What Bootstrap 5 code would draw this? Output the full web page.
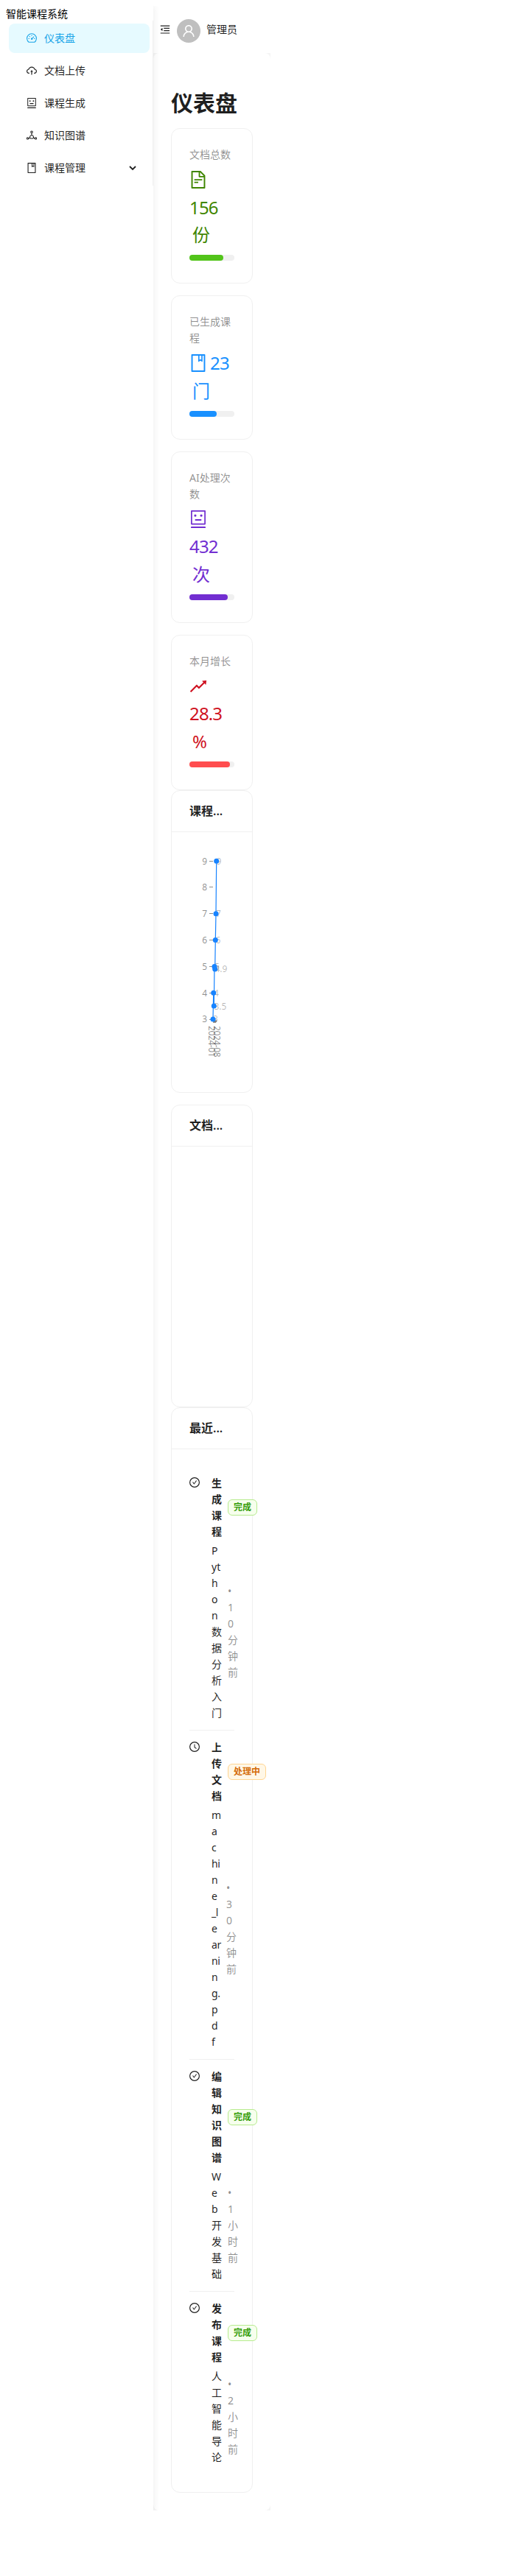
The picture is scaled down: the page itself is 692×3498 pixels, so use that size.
<!DOCTYPE html>
<html lang="zh-CN">
<head>
<meta charset="utf-8">
<title>智能课程系统</title>
<link href="https://cdn.jsdelivr.net/npm/bootstrap@5.3.0/dist/css/bootstrap.min.css" rel="stylesheet">
<style>
body{margin:8px;font:14px/22px "Noto Sans","Noto Sans CJK SC",sans-serif;color:rgba(0,0,0,.88);background:#fff}
svg.ico{width:1em;height:1em;fill:currentColor;flex:none;display:block}
.layout{width:359px;height:3401px;background:#f5f5f5}
.sider{width:200px;background:#fff;box-shadow:2px 0 8px rgba(0,0,0,.06);position:relative;z-index:1}
.logo-text{height:20px;line-height:22px;color:#000}
.menu{border-right:1px solid #f0f0f0;padding:4px 4px 0;height:224px}
.menu .nav-link{height:40px;margin-bottom:4px;padding:0 18px 0 24px;border-radius:8px;color:rgba(0,0,0,.88);gap:10px}
.menu .nav-link.active{background:#e6faff;color:#18a4e8}
.topbar{height:64px;background:#fff;padding-left:9px}
.avatar-disc{width:32px;height:32px;background:#bfbfbf;color:#fff;font-size:18px;margin-left:9px;margin-right:8px}
.main-area{width:159px;background:#fff;border-radius:8px;padding:24px;flex:1}
h2{font-size:30px;line-height:38px;font-weight:600;margin:25px 0 15px}
.panel{border:1px solid #f0f0f0;border-radius:12px;background:#fff;width:111px}
.stat{padding:24px;margin-bottom:16px}
.stat.last{margin-bottom:0}
.stat-title{color:rgba(0,0,0,.45);margin-bottom:4px}
.stat-value{font-size:24px;line-height:37.71px}
.num{letter-spacing:-.85px}
.stat-value svg{display:inline-block;vertical-align:-3px}
.suffix{display:inline-block;margin-left:4px}
.track{height:8px;border-radius:8px;background:#f0f0f0;margin:8px 0 6px}
.track div{height:8px;border-radius:8px}
.panel-head{height:56px;border-bottom:1px solid #f0f0f0;padding:0 24px;font-size:16px;font-weight:600;line-height:55px;white-space:nowrap}
.tall{height:411px}
.feed{padding:23px 24px 24px}
.entry{padding:12px 0;border-bottom:1px solid #f0f0f0;display:flex}
.entry:last-child{border-bottom:0}
.entry>svg{margin:3px 16px 0 0}
.pair{display:flex;align-items:center;gap:8px}
.pair>:first-child{width:14px;word-break:break-all;flex:none}
.pair.tight>:first-child{width:12px;white-space:nowrap;letter-spacing:-.4px}
.when{width:14px;color:rgba(0,0,0,.45);word-break:break-all;flex:none}
.title-row{font-weight:600;margin-bottom:4px}
.state{font-size:12px;line-height:20px;padding:0 7px;border:1px solid #b7eb8f;border-radius:6px;background:#f6ffed;color:#389e0d;white-space:nowrap;flex:none}
.state.busy{border-color:#ffd591;background:#fff7e6;color:#d46b08}
.chart text{font-size:12px;fill:#000;fill-opacity:.45}
.chart .vals text{fill-opacity:.28}
.chart .dates text{letter-spacing:-.4px}
</style>
</head>
<body>
<svg class="d-none">
<symbol id="i-file" viewBox="64 64 896 896"><path d="M854.6 288.6L639.4 73.4c-6-6-14.1-9.4-22.6-9.4H192c-17.7 0-32 14.3-32 32v832c0 17.7 14.3 32 32 32h640c17.7 0 32-14.3 32-32V311.3c0-8.5-3.4-16.7-9.4-22.7zM790.2 326H602V137.8L790.2 326zm1.8 562H232V136h302v216a42 42 0 0042 42h216v494zM504 618H320c-4.4 0-8 3.6-8 8v48c0 4.4 3.6 8 8 8h184c4.4 0 8-3.6 8-8v-48c0-4.4-3.6-8-8-8zM312 490v48c0 4.4 3.6 8 8 8h384c4.4 0 8-3.6 8-8v-48c0-4.4-3.6-8-8-8H320c-4.4 0-8 3.6-8 8z"/></symbol>
<symbol id="i-book" viewBox="64 64 896 896"><path d="M832 64H192c-17.7 0-32 14.3-32 32v832c0 17.7 14.3 32 32 32h640c17.7 0 32-14.3 32-32V96c0-17.7-14.3-32-32-32zm-260 72h96v209.9L621.5 312 572 347.4V136zm220 752H232V136h280v296.9c0 3.3 1 6.6 3 9.3a15.9 15.9 0 0022.3 3.7l83.8-59.9 81.4 59.4c2.7 2 6 3.1 9.4 3.1 8.8 0 16-7.2 16-16V136h64v752z"/></symbol>
<symbol id="i-robot" viewBox="64 64 896 896"><path d="M300 328a60 60 0 10120 0 60 60 0 10-120 0zM852 64H172c-17.7 0-32 14.3-32 32v660c0 17.7 14.3 32 32 32h680c17.7 0 32-14.3 32-32V96c0-17.7-14.3-32-32-32zm-32 660H204V128h616v596zM604 328a60 60 0 10120 0 60 60 0 10-120 0zm250.2 556H169.8c-16.5 0-29.8 14.3-29.8 32v36c0 4.4 3.3 8 7.4 8h729.1c4.1 0 7.4-3.6 7.4-8v-36c.1-17.7-13.2-32-29.7-32zM664 508H360c-4.4 0-8 3.6-8 8v60c0 4.4 3.6 8 8 8h304c4.4 0 8-3.6 8-8v-60c0-4.4-3.6-8-8-8z"/></symbol>
<symbol id="i-check" viewBox="64 64 896 896"><path d="M699 353h-46.9c-10.2 0-19.9 4.9-25.9 13.3L469 584.3l-71.2-98.8c-6-8.3-15.6-13.3-25.9-13.3H325c-6.5 0-10.3 7.4-6.5 12.7l124.6 172.8a31.8 31.8 0 0051.7 0l210.6-292c3.9-5.3.1-12.7-6.4-12.7z"/><circle cx="512" cy="512" r="410" fill="none" stroke="currentColor" stroke-width="76"/></symbol>
<symbol id="i-clock" viewBox="64 64 896 896"><path d="M686.7 638.6L544.1 535.5V288c0-4.4-3.6-8-8-8H488c-4.4 0-8 3.6-8 8v275.4c0 2.6 1.2 5 3.3 6.5l165.4 120.6c3.6 2.6 8.6 1.8 11.2-1.7l28.6-39c2.6-3.7 1.8-8.7-1.8-11.2z"/><circle cx="512" cy="512" r="410" fill="none" stroke="currentColor" stroke-width="76"/></symbol>
</svg>
<div class="layout d-flex">
  <aside class="sider">
    <div class="logo-text">智能课程系统</div>
    <nav class="menu nav flex-column flex-nowrap">
      <a class="nav-link active d-flex align-items-center"><svg class="ico" viewBox="64 64 896 896"><g fill="none" stroke="currentColor" stroke-width="70"><path d="M262 850A410 410 0 1 1 762 850Z" stroke-linejoin="round"/><path d="M512 235v90M225 540h90M709 540h90M305 335l62 62"/></g><path d="M700 335l45 45-150 150a80 80 0 1 1-45-45z"/></svg>仪表盘</a>
      <a class="nav-link d-flex align-items-center"><svg class="ico" viewBox="64 64 896 896"><path d="M518.3 459a8 8 0 00-12.6 0l-112 141.7a7.98 7.98 0 006.3 12.9h73.9V856c0 4.4 3.6 8 8 8h60c4.4 0 8-3.6 8-8V613.7H624c6.7 0 10.4-7.7 6.3-12.9L518.3 459z"/><path d="M811.4 366.7C765.6 245.9 648.9 160 512.2 160S258.8 245.8 213 366.6C127.3 389.1 64 467.2 64 560c0 110.5 89.5 200 199.9 200H304c4.4 0 8-3.6 8-8v-60c0-4.4-3.6-8-8-8h-40.1c-33.7 0-65.4-13.4-89-37.7-23.5-24.2-36-56.8-34.9-90.6.9-26.4 9.9-51.2 26.2-72.1 16.7-21.3 40.1-36.8 66.1-43.7l37.9-9.9 13.9-36.6c8.6-22.8 20.6-44.1 35.7-63.4a245.6 245.6 0 0152.4-49.9c41.1-28.9 89.5-44.2 140-44.2s98.9 15.3 140 44.2c19.9 14 37.5 30.8 52.4 49.9 15.1 19.3 27.1 40.7 35.7 63.4l13.8 36.5 37.8 10C846.1 454.5 884 503.8 884 560c0 33.1-12.9 64.3-36.3 87.7a123.07 123.07 0 01-87.6 36.3H720c-4.4 0-8 3.6-8 8v60c0 4.4 3.6 8 8 8h40.1C870.5 760 960 670.5 960 560c0-92.7-63.1-170.7-148.6-193.3z"/></svg>文档上传</a>
      <a class="nav-link d-flex align-items-center"><svg class="ico"><use href="#i-robot"/></svg>课程生成</a>
      <a class="nav-link d-flex align-items-center"><svg class="ico" viewBox="64 64 896 896"><g fill="none" stroke="currentColor" stroke-width="68"><circle cx="512" cy="210" r="82"/><circle cx="165" cy="760" r="75"/><circle cx="859" cy="760" r="75"/><path d="M512 292v180M512 472L375 560 345 700 425 770H600L680 700 650 560zM350 715L235 765M675 715l115 50"/></g></svg>知识图谱</a>
      <a class="nav-link d-flex align-items-center"><svg class="ico"><use href="#i-book"/></svg>课程管理<svg class="ms-auto" width="10" height="10" viewBox="0 0 10 10"><path d="M1 3l4 4 4-4" fill="none" stroke="currentColor" stroke-width="1.8"/></svg></a>
    </nav>
  </aside>
  <div class="d-flex flex-column">
    <header class="topbar d-flex align-items-center">
      <svg class="ico" viewBox="64 64 896 896"><path d="M408 442h480c4.400 0 8-3.600 8-8v-56c0-4.400-3.600-8-8-8H408c-4.400 0-8 3.600-8 8v56c0 4.400 3.600 8 8 8zm-8 204c0 4.400 3.600 8 8 8h480c4.400 0 8-3.600 8-8v-56c0-4.400-3.600-8-8-8H408c-4.400 0-8 3.600-8 8v56zm504-486H120c-4.400 0-8 3.600-8 8v56c0 4.400 3.600 8 8 8h784c4.400 0 8-3.600 8-8v-56c0-4.400-3.600-8-8-8zm0 632H120c-4.400 0-8 3.600-8 8v56c0 4.400 3.600 8 8 8h784c4.400 0 8-3.600 8-8v-56c0-4.400-3.600-8-8-8zM115.400 518.900L271.700 642c5.800 4.600 14.400.5 14.400-6.900V388.900c0-7.400-8.500-11.500-14.400-6.900L115.400 505.100a8.740 8.740 0 000 13.800z"/></svg>
      <span class="avatar-disc rounded-circle d-flex align-items-center justify-content-center mt-1"><svg class="ico" viewBox="64 64 896 896"><path d="M858.5 763.6a374 374 0 00-80.6-119.5 375.63 375.63 0 00-119.500-80.600c-.4-.2-.8-.3-1.200-.5C719.500 518 760 444.700 760 362c0-137-111-248-248-248S264 225 264 362c0 82.700 40.500 156 102.800 201.100-.4.2-.8.3-1.200.5-44.800 18.900-85 46-119.500 80.600a375.630 375.630 0 00-80.600 119.500A371.700 371.700 0 00136 901.800a8 8 0 008 8.200h60c4.400 0 7.900-3.500 8-7.800 2-77.200 33-149.500 87.800-204.300 56.700-56.700 132-87.900 212.200-87.900s155.500 31.200 212.200 87.900C779 752.700 810 825 812 902.200c.1 4.400 3.600 7.800 8 7.800h60a8 8 0 008-8.200c-1-47.800-10.900-94.300-29.500-138.200zM512 534c-45.900 0-89.100-17.900-121.600-50.400S340 407.900 340 362c0-45.900 17.900-89.100 50.400-121.600S466.100 190 512 190s89.100 17.900 121.600 50.400S684 316.100 684 362c0 45.900-17.900 89.100-50.400 121.600S557.900 534 512 534z"/></svg></span>管理员
    </header>
    <main class="main-area">
      <h2>仪表盘</h2>
      <div class="panel stat"><div class="stat-title">文档总数</div>
        <div class="stat-value" style="color:#3f8600"><svg class="ico"><use href="#i-file"/></svg><br><span class="num">156</span><br><span class="suffix">份</span></div>
        <div class="track"><div style="width:75%;background:#52c41a"></div></div></div>
      <div class="panel stat"><div class="stat-title">已生成课程</div>
        <div class="stat-value text-nowrap" style="color:#1890ff"><svg class="ico"><use href="#i-book"/></svg><span class="suffix num">23</span><br><span class="suffix">门</span></div>
        <div class="track"><div style="width:60%;background:#1890ff"></div></div></div>
      <div class="panel stat"><div class="stat-title">AI处理次数</div>
        <div class="stat-value" style="color:#722ed1"><svg class="ico"><use href="#i-robot"/></svg><br><span class="num">432</span><br><span class="suffix">次</span></div>
        <div class="track"><div style="width:85%;background:#722ed1"></div></div></div>
      <div class="panel stat last"><div class="stat-title">本月增长</div>
        <div class="stat-value" style="color:#cf1322"><svg class="ico" viewBox="64 64 896 896"><path d="M917 211.1l-199.2 24c-6.6.8-9.4 8.9-4.7 13.6l59.3 59.3-226 226-101.8-101.7c-6.3-6.3-16.4-6.2-22.6 0L100.3 754.1a8.03 8.03 0 000 11.3l45 45.2c3.1 3.1 8.2 3.1 11.3 0L433.3 534 535 635.7c6.3 6.2 16.4 6.2 22.6 0L829 364.5l59.3 59.3a8.01 8.01 0 0013.6-4.7l24-199.2c.7-5.1-3.7-9.5-8.9-8.8z"/></svg><br><span class="num">28.3</span><br><span class="suffix">%</span></div>
        <div class="track"><div style="width:90%;background:#ff4d4f"></div></div></div>
      <section class="panel tall"><div class="panel-head">课程...</div>
        <svg class="chart d-block" width="109" height="340" viewBox="233 1130 109 340">
          <g text-anchor="end"><text x="281" y="1173.500">9</text><text x="281" y="1209">8</text><text x="281" y="1245">7</text><text x="281" y="1281">6</text><text x="281" y="1317">5</text><text x="281" y="1353">4</text><text x="281" y="1388">3</text></g>
          <path d="M284 1169.500h5M284 1204.500h5M284 1240.500h5M284 1276.500h5M284 1312.500h5M284 1348.500h5M284 1384.500h5" stroke="#000" stroke-opacity=".45"/>
          <path d="M289.500 1385v4M290.500 1385v4M291.500 1385v4M292.500 1385v4M293.500 1385v3" stroke="#000" stroke-opacity=".4"/>
          <g class="vals"><text x="293.500" y="1173.500">9</text><text x="293" y="1245">7</text><text x="292.500" y="1281">6</text><text x="291" y="1317">5</text><text x="291.500" y="1320">4.9</text><text x="290" y="1353">4</text><text x="290.500" y="1371">3.5</text><text x="289" y="1388">3</text></g>
          <g class="dates"><text transform="translate(283,1393) rotate(90)">2024-01</text><text transform="translate(289.500,1393) rotate(90)">2024-08</text></g>
          <path d="M289 1384L289.700 1348.200 290.300 1366 291 1312.400 291.700 1316 292.300 1276.600 293 1240.800 293.700 1169.200" fill="none" stroke="#1783ff" stroke-width="1.200"/>
          <g fill="#1783ff"><circle cx="289" cy="1384" r="3.500"/><circle cx="289.700" cy="1348.200" r="3.500"/><circle cx="290.300" cy="1366" r="3.500"/><circle cx="291" cy="1312.400" r="3.500"/><circle cx="291.700" cy="1316" r="3.500"/><circle cx="292.300" cy="1276.600" r="3.500"/><circle cx="293" cy="1240.800" r="3.500"/><circle cx="293.700" cy="1169.200" r="3.500"/></g>
        </svg></section>
      <section class="panel tall mt-3"><div class="panel-head">文档...</div></section>
      <section class="panel"><div class="panel-head">最近...</div>
        <div class="feed">
          <div class="entry"><svg class="ico"><use href="#i-check"/></svg><div><div class="pair title-row"><span>生成课程</span><span class="state">完成</span></div><div class="pair"><span>Python数据分析入门</span><span class="when">• 10分钟前</span></div></div></div>
          <div class="entry"><svg class="ico"><use href="#i-clock"/></svg><div><div class="pair title-row"><span>上传文档</span><span class="state busy">处理中</span></div><div class="pair tight"><span>m<br>a<br>c<br>hi<br>n<br>e<br>_l<br>e<br>ar<br>ni<br>n<br>g.<br>p<br>d<br>f</span><span class="when">• 30分钟前</span></div></div></div>
          <div class="entry"><svg class="ico"><use href="#i-check"/></svg><div><div class="pair title-row"><span>编辑知识图谱</span><span class="state">完成</span></div><div class="pair"><span>Web开发基础</span><span class="when">• 1小时前</span></div></div></div>
          <div class="entry"><svg class="ico"><use href="#i-check"/></svg><div><div class="pair title-row"><span>发布课程</span><span class="state">完成</span></div><div class="pair"><span>人工智能导论</span><span class="when">• 2小时前</span></div></div></div>
        </div></section>
    </main>
  </div>
</div>
<script src="https://cdn.jsdelivr.net/npm/bootstrap@5.3.0/dist/js/bootstrap.bundle.min.js"></script>
</body>
</html>
